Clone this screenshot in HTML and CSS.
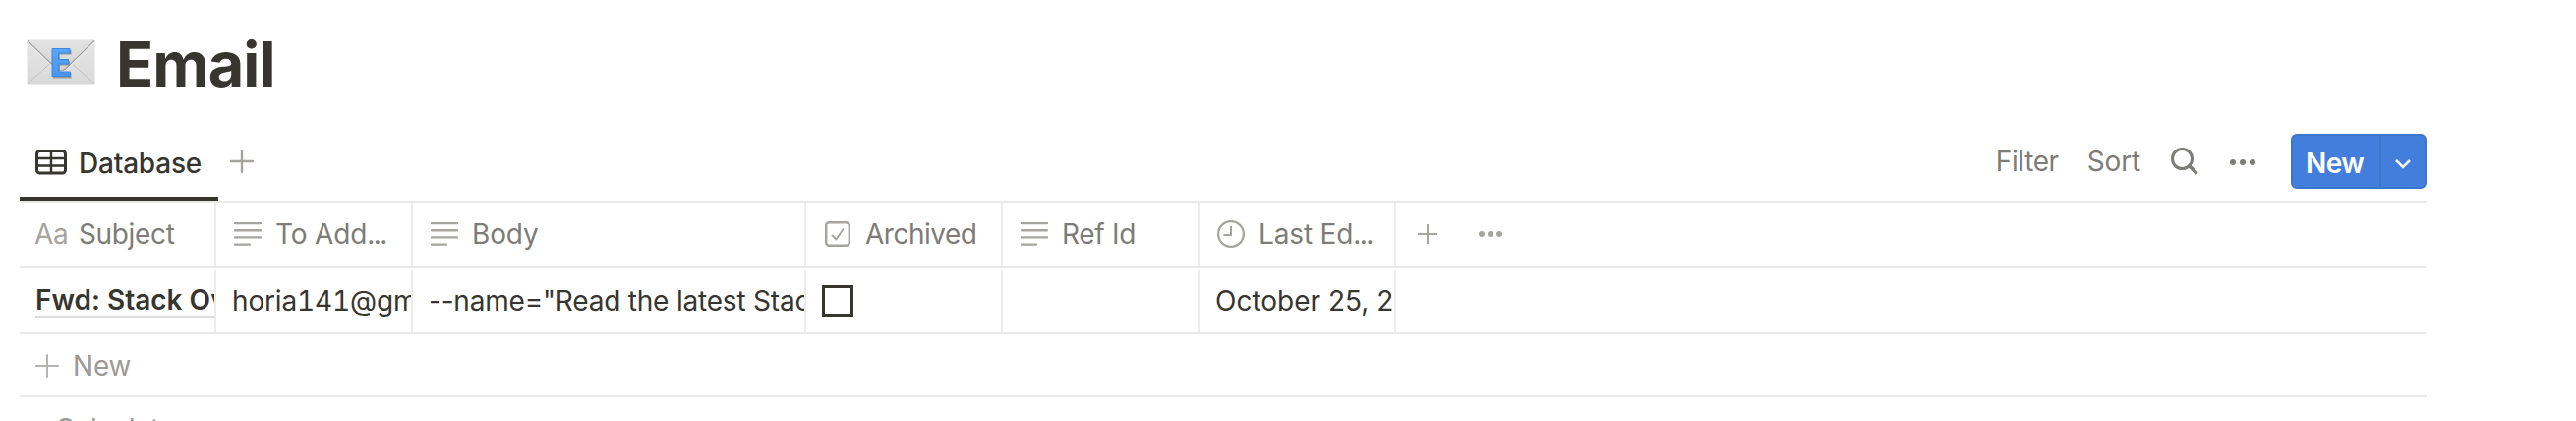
FILE: index.html
```html
<!DOCTYPE html>
<html lang="en">
<head>
<meta charset="utf-8">
<title>Email</title>
<link rel="stylesheet" href="styles.css">
</head>
<body>
<svg class="defs" width="0" height="0">
  <symbol id="lines" viewBox="0 0 28 24"><path d="M1 1h26M1 8.2h26M1 15.4h26M1 22.6h15" fill="none" stroke="currentColor" stroke-width="2.4" stroke-linecap="round"/></symbol>
</svg>
<main class="page">
  <header class="title">
    <svg class="envelope" viewBox="0 0 70 46">
      <defs>
        <linearGradient id="paper" x1="0" y1="0" x2="0" y2="1"><stop offset="0" stop-color="#e6e6e6"/><stop offset="1" stop-color="#d9d9d9"/></linearGradient>
        <linearGradient id="flap" x1="0" y1="0" x2="0" y2="1"><stop offset="0" stop-color="#e3e3e3"/><stop offset="1" stop-color="#d2d2d2"/></linearGradient>
        <linearGradient id="letter" x1="0" y1="0" x2="0" y2="1"><stop offset="0" stop-color="#58a6f8"/><stop offset="1" stop-color="#4795f0"/></linearGradient>
      </defs>
      <rect x=".5" y=".5" width="69" height="45" rx="1.5" fill="url(#paper)" stroke="#eeeeee"/>
      <path d="M1 45L27 22M69 45L43 22" stroke="#c2c2c2" stroke-width="1"/>
      <path d="M1 1L30 29Q35 33 40 29L69 1Z" fill="url(#flap)"/>
      <path d="M1 1.500L30 29.500Q35 34 40 29.500L69 1.500" fill="none" stroke="#9c9ea2" stroke-width="1.100"/>
      <path d="M1 2.800L29 30.300M69 2.800L41 30.300" stroke="#f4f4f4" stroke-width="1"/>
      <path d="M27 11H45.500V15.500H34V22H44V26.500H34V34H45.500V39.500H27Z" fill="#5f6368" opacity=".55"/>
      <path d="M26 9.500H44V14H32.500V20.500H42.500V25H32.500V33H44.500V37.500H26Z" fill="url(#letter)" stroke="#3d8ae2" stroke-width="1" stroke-linejoin="round"/>
    </svg>
    <h1>Email</h1>
  </header>
  <nav class="toolbar">
    <div class="tab">
      <svg class="i-table" viewBox="0 0 32 26"><rect x="1.500" y="1.500" width="29" height="22.500" rx="3" fill="none" stroke="currentColor" stroke-width="3"/><path d="M1 9H31M1 16.500H31M16 2V24" stroke="currentColor" stroke-width="2.400"/></svg>
      <span class="t-database">Database</span>
    </div>
    <svg class="i-addview" viewBox="0 0 24 24"><path d="M12 1V23M1 12H23" stroke="currentColor" stroke-width="2.400" stroke-linecap="round"/></svg>
    <div class="actions">
      <span class="t-filter">Filter</span>
      <span class="t-sort">Sort</span>
      <svg class="i-search" viewBox="0 0 28 28"><circle cx="11.500" cy="11.500" r="10" fill="none" stroke="currentColor" stroke-width="3"/><path d="M19 19L25.500 25.500" stroke="currentColor" stroke-width="3.800" stroke-linecap="round"/></svg>
      <svg class="i-more" viewBox="0 0 26 6"><g fill="currentColor"><circle cx="3" cy="3" r="3"/><circle cx="13" cy="3" r="3"/><circle cx="23" cy="3" r="3"/></g></svg>
      <div class="button"><span class="new">New</span><span class="drop"><svg viewBox="0 0 18 12"><path d="M2 2L9 9L16 2" fill="none" stroke="#fff" stroke-width="2.500"/></svg></span></div>
    </div>
  </nav>
  <section class="table">
    <div class="row head">
      <div class="cell"><span class="aa">Aa</span><span class="t-subject">Subject</span></div>
      <div class="cell"><svg class="i-lines"><use href="#lines"/></svg><span>To Add<span class="dots">...</span></span></div>
      <div class="cell"><svg class="i-lines"><use href="#lines"/></svg><span>Body</span></div>
      <div class="cell"><svg class="i-check" viewBox="0 0 26 26"><rect x="1.200" y="1.200" width="23.600" height="23.600" rx="3" fill="none" stroke="currentColor" stroke-width="2.400"/><path d="M7.500 14.500L11.500 18.500L18.500 8" fill="none" stroke="currentColor" stroke-width="1.800" stroke-linecap="round" stroke-linejoin="round"/></svg><span class="t-archived">Archived</span></div>
      <div class="cell"><svg class="i-lines"><use href="#lines"/></svg><span class="t-ref">Ref Id</span></div>
      <div class="cell"><svg class="i-clock" viewBox="0 0 28 28"><circle cx="14" cy="14" r="12.900" fill="none" stroke="currentColor" stroke-width="2.200"/><path d="M14 6V15H6.500" fill="none" stroke="currentColor" stroke-width="2"/></svg><span>Last Ed<span class="dots">...</span></span></div>
      <div class="cell tools"><svg class="i-addcol" viewBox="0 0 20 22"><path d="M10 1V21M0 11H20" stroke="currentColor" stroke-width="2"/></svg><svg class="i-colmore" viewBox="0 0 24 6"><g fill="currentColor"><circle cx="3" cy="3" r="3"/><circle cx="12" cy="3" r="3"/><circle cx="21" cy="3" r="3"/></g></svg></div>
    </div>
    <div class="row data">
      <div class="cell"><span class="link">Fwd: Stack Ov</span></div>
      <div class="cell"><span class="t-address">horia141@gm</span></div>
      <div class="cell"><span class="t-content">--name="Read the latest Stac</span></div>
      <div class="cell"><span class="box"></span></div>
      <div class="cell"></div>
      <div class="cell"><span class="t-date">October 25, 2</span></div>
      <div class="cell"></div>
    </div>
    <div class="newrow"><svg class="i-addrow" viewBox="0 0 24 24"><path d="M12 1V23M1 12H23" stroke="currentColor" stroke-width="2" stroke-linecap="round"/></svg><span>New</span></div>
    <div class="calc"><span>Calculate</span></div>
  </section>
</main>
</body>
</html>
```
FILE: styles.css
```css
* { box-sizing: border-box; }
body { margin: 0; height: 428px; overflow: hidden; background: #fff; color: #37352f; font: 28px/40px Inter, "Liberation Sans", sans-serif; letter-spacing: -.15px; }
.defs { display: block; width: 0; height: 0; }
.page { width: 2468px; height: 428px; padding-left: 20px; overflow: hidden; }
svg { display: block; flex: none; overflow: visible; }
span { white-space: nowrap; flex: none; }
.title { display: flex; height: 128px; padding: 40px 0 0 7px; }
.envelope { width: 70px; height: 46px; }
h1 { margin: -13px 0 0 21px; font-size: 63px; line-height: 76px; font-weight: 700; letter-spacing: -1px; }
.toolbar { display: flex; height: 78px; border-bottom: 2px solid #e9e9e7; }
.tab { display: flex; align-items: flex-start; width: 202px; height: 76px; padding: 18px 0 0 16px; border-bottom: 4px solid #37352f; font-weight: 500; }
.i-table { width: 32px; height: 26px; margin: 6px 12px 0 0; }
.t-database { letter-spacing: -.2px; }
.i-addview { width: 24px; height: 24px; margin: 24px 0 0 12px; color: #a5a49f; }
.actions { display: flex; margin-left: auto; color: #7d7c78; }
.actions > span { margin-top: 16px; }
.t-filter { letter-spacing: -.4px; }
.t-sort { margin-left: 29px; }
.i-search { width: 28px; height: 28px; margin: 22px 0 0 31px; }
.i-more { width: 26px; height: 6px; margin: 34px 36px 0 32px; }
.button { display: flex; width: 138px; height: 56px; margin-top: 8px; border: 2px solid #3b76c8; border-radius: 6px; background: #427fdc; color: #fff; font-weight: 600; }
.new { width: 90px; padding: 8px 0 0 13px; border-right: 2px solid #3b76c4; letter-spacing: -.6px; }
.drop { padding: 23px 0 0 13px; }
.drop svg { width: 18px; height: 12px; }
.row { display: grid; grid-template-columns: 200px 200px 400px 200px 200px 200px 1fr; border-bottom: 2px solid #e9e9e7; }
.head { height: 66px; color: #7d7c78; }
.data { height: 68px; padding-top: 2px; }
.cell { display: flex; align-items: center; min-width: 0; overflow: hidden; padding-left: 16px; border-right: 2px solid #ececea; }
.cell:last-child { border-right: 0; }
.head .cell { padding-left: 18px; }
.head .cell:first-child { padding-left: 15px; }
.head svg, .aa { color: #a5a49f; }
.aa { width: 45px; letter-spacing: -.3px; }
.t-subject { letter-spacing: -.35px; }
.t-archived { letter-spacing: -.5px; }
.t-ref { letter-spacing: -.3px; }
.dots { letter-spacing: -1.6px; }
.i-lines { width: 28px; height: 24px; margin-right: 14px; }
.i-check { width: 26px; height: 26px; margin: 0 15px 0 1px; }
.i-clock { width: 28px; height: 28px; margin-right: 14px; }
.head .tools { padding-left: 22px; }
.i-addcol { width: 20px; height: 22px; margin-right: 42px; }
.i-colmore { width: 24px; height: 6px; }
.link { font-weight: 600; border-bottom: 2px solid #dcdcda; line-height: 32px; letter-spacing: 0; }
.t-address { font-variant-numeric: tabular-nums; letter-spacing: -.15px; }
.t-content { letter-spacing: -.2px; }
.t-date { letter-spacing: 0; }
.box { width: 32px; height: 32px; border: 3px solid #37352f; }
.newrow { display: flex; align-items: center; height: 64px; padding: 1px 0 0 16px; border-bottom: 2px solid #e9e9e7; color: #9b9a97; }
.i-addrow { width: 24px; height: 24px; margin-right: 14px; color: #b4b3b0; }
.calc { padding: 12px 0 0 36px; color: #9b9a97; }
```
